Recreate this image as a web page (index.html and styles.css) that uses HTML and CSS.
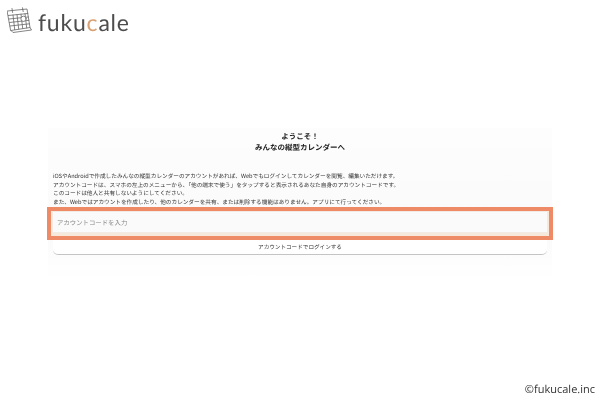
FILE: index.html
```html
<!DOCTYPE html>
<html lang="ja">
<head>
<meta charset="utf-8">
<title>fukucale</title>
<link rel="stylesheet" href="styles.css">
</head>
<body>
<div class="page">
  <header class="brand">
    <svg class="brand-icon" viewBox="0 0 26 26" width="26" height="26" fill="none" stroke="#666" stroke-width="0.8" stroke-linejoin="round" stroke-linecap="round">
      <path d="M1.5 4 L21 2 L24 20.5 L5 23.5 Z" fill="#fff"/>
      <path d="M5 23.5 L7 25.5 L25.5 23 L24 20.5"/>
      <path d="M2.4 8.5 L21.8 6.5"/>
      <path d="M6 1.5 L6.6 5.5 M16.5 0.8 L17.2 4.6"/>
      <path d="M3 12 L22.3 10 M3.6 15.5 L22.9 13.3 M4.2 19 L23.5 16.8"/>
      <path d="M7 8 L8.7 22.6 M11 7.6 L12.7 22 M15 7.2 L16.7 21.5 M19 6.8 L20.7 21"/>
      <circle cx="17.5" cy="11.8" r="2.6" fill="#fff"/>
    </svg>
    <span class="brand-name">fuku<span class="brand-accent">c</span>ale</span>
  </header>

  <main class="card">
    <h1 class="card-title">ようこそ！<br>みんなの縦型カレンダーへ</h1>
    <p class="card-text">iOSやAndroidで作成したみんなの縦型カレンダーのアカウントがあれば、Webでもログインしてカレンダーを閲覧、編集いただけます。<br>アカウントコードは、スマホの左上のメニューから、「他の端末で使う」をタップすると表示されるあなた自身のアカウントコードです。<br>このコードは他人と共有しないようにしてください。<br>また、Webではアカウントを作成したり、他のカレンダーを共有、または削除する機能はありません。アプリにて行ってください。</p>
    <div class="highlight">
      <div class="code-input">アカウントコードを入力</div>
    </div>
    <div class="login-button">アカウントコードでログインする</div>
  </main>

  <footer class="copyright">©fukucale.inc</footer>
</div>
</body>
</html>
```

FILE: styles.css
```css
* { box-sizing: border-box; }
html, body { margin: 0; padding: 0; background: #fff; }
.page {
  width: 600px;
  height: 400px;
  display: flex;
  flex-direction: column;
  font-family: "Noto Sans CJK JP", "Noto Sans", sans-serif;
  text-rendering: geometricPrecision;
  color: #333;
  overflow: hidden;
  filter: blur(0.35px);
}
.brand {
  display: flex;
  align-items: center;
  gap: 6px;
  height: 26px;
  margin: 7px 0 0 6px;
}
.brand-name {
  font-family: Lato, sans-serif;
  font-size: 23px;
  letter-spacing: 0.8px;
  color: #4d4d4d;
  line-height: 26px;
  margin-top: 4px;
}
.brand-accent { color: #d9a070; }
.card {
  width: 504px;
  height: 152px;
  margin: 95px 0 0 48px;
  padding-top: 4px;
  display: flex;
  flex-direction: column;
  background: linear-gradient(#fdfdfd 0, #fafafa 70%, #fff 100%);
}
.card-title {
  margin: 0;
  text-align: center;
  font-size: 7.5px;
  font-weight: 700;
  line-height: 10.5px;
  color: #222;
}
.card-text {
  margin: 19px 0 0;
  padding-left: 5px;
  font-size: 5.65px;
  line-height: 8.7px;
  color: #333;
  white-space: nowrap;
}
.highlight {
  margin: 0 -1px;
  height: 33px;
  border: 4px solid #ee8a66;
  display: flex;
  background: #f6e9dc;
}
.code-input {
  flex: 1;
  margin: 0 1px 3px;
  padding-left: 4px;
  background: #fafafa;
  border: 1px solid #f1ebe4;
  font-size: 6.4px;
  line-height: 21px;
  color: #8a8a8a;
}
.login-button {
  width: 494px;
  height: 15px;
  margin: 0 0 0 5px;
  background: #fff;
  border-bottom: 1px solid #c4c4c4;
  border-radius: 0 0 5px 5px;
  text-align: center;
  font-size: 5.6px;
  line-height: 15px;
  color: #333;
}
.copyright {
  margin: auto 5px 3px auto;
  font-family: "Open Sans", sans-serif;
  font-size: 11px;
  line-height: 14px;
  color: #333;
}
```
